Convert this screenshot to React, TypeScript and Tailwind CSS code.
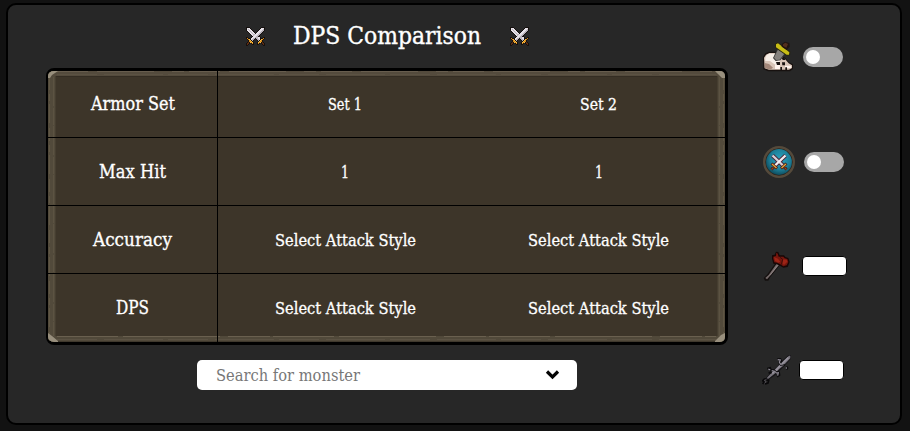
import React from "react";

const palette: Record<string, string> = {
  K: "#15100e",
  W: "#e6e2e8",
  G: "#b9b3bb",
  O: "#d98a18",
  Y: "#f6bd48",
  B: "#5a2c14",
};

const swordRows = [
  "KKKK...........KKKK",
  "KWWWK.........KWWWK",
  "KWGWWK.......KWWWGK",
  "KWWGWWK.....KWWWGGK",
  ".KWWGWWK...KWWWGGK.",
  "..KWWGWWK.KWWWGGK..",
  "...KWWGWWKWWWGGK...",
  "....KWWGGWWWGGK....",
  ".....KWGWWWGGK.....",
  "......KWWWGGKK.....",
  "KK...KWWWGGGWWK..KK",
  "KOKKKWWGGKGGWWKKKOK",
  ".KOYKWGGK.KGGWKYOK.",
  "..KOYKGK...KGKYOK..",
  "..KOOYK.....KYOOK..",
  ".KBKYOYK...KYOYKBK.",
  "KBBK.KOK...KOK.KBBK",
  "KBK...KK...KK...KBK",
  "KK...............KK",
];

function Swords() {
  return (
    <svg width="19" height="19" viewBox="0 0 19 19" shapeRendering="crispEdges" className="shrink-0">
      {swordRows.flatMap((row, r) =>
        [...row].map((c, i) =>
          c === "." ? null : <rect key={`${r}-${i}`} x={i} y={r} width="1" height="1" fill={palette[c]} />
        )
      )}
    </svg>
  );
}

function Skull() {
  return (
    <svg width="32" height="32" viewBox="36 33 96 96">
      <path d="M39 81L46 70L57 65H78L93 76L106 84L117 97L129 103V117L120 124H54L40 118Z" fill="#17110f" />
      <path d="M42 83L48 74L58 69H75L91 79L105 87L116 100L126 106V114L117 119H57L44 115Z" fill="#d8c5b8" />
      <path d="M50 75L58 71H73L87 84L90 100L78 106L60 93H46V84Z" fill="#f6eee7" />
      <path d="M44 99L57 102L69 113L63 118H54L44 113Z" fill="#a38779" />
      <path d="M75 105H90V117H75ZM105 107H123V114H105Z" fill="#fff4ee" />
      <path d="M78 96H90V105H81ZM96 97H105V106H97ZM95 83H103L106 90H98ZM91 111H96V120H91ZM106 112H111V120H106Z" fill="#17110f" />
      <path d="M84 53L107 71L91 91L77 93L69 84Z" fill="#343332" />
      <path d="M85 56L103 71L89 89L78 90L72 83Z" fill="#85817d" />
      <path d="M75 41L83 37L121 65L120 76L110 77L76 54Z" fill="#29270e" />
      <path d="M78 43L84 40L118 67L117 74L110 74L78 52Z" fill="#c9be16" />
      <path d="M95 42L105 35L118 39L119 50L110 60L95 50Z" fill="#211510" />
      <path d="M99 43L106 38L114 42L109 53L99 48Z" fill="#53301f" />
    </svg>
  );
}

function Medallion() {
  return (
    <svg width="32" height="32" viewBox="0 0 32 32">
      <defs>
        <radialGradient id="teal" cx=".55" cy=".4" r=".6">
          <stop offset="0" stopColor="#2ba5c0" />
          <stop offset=".65" stopColor="#1d7f98" />
          <stop offset="1" stopColor="#0f4e60" />
        </radialGradient>
      </defs>
      <circle cx="16" cy="16" r="14.6" fill="#12282c" stroke="#554a3b" strokeWidth="2.8" />
      <circle cx="16" cy="16" r="13.3" fill="none" stroke="#302219" strokeWidth="0.8" />
      <circle cx="16" cy="16" r="12.9" fill="url(#teal)" />
      <g fill="none">
        <path d="M9.5 9.5L21 20.5M22.5 9.5L11 20.5" stroke="#4b2030" strokeWidth="4" />
        <path d="M9.5 9.5L20.5 20" stroke="#d6d1d8" strokeWidth="2.4" />
        <path d="M22.5 9.5L11.5 20" stroke="#f0edf1" strokeWidth="2.4" />
        <path d="M8.5 17.5L14 22.5M23.5 17.5L18 22.5M11.5 20L8.5 23.5M20.5 20L23.5 23.5" stroke="#471a12" strokeWidth="2.8" />
        <path d="M9 18L13.5 22M23 18L18.5 22" stroke="#e4a33a" strokeWidth="1.4" />
        <path d="M10.5 21.5L8.5 23.5M21.5 21.5L23.5 23.5" stroke="#8c4320" strokeWidth="1.2" />
      </g>
    </svg>
  );
}

function Axe() {
  return (
    <svg width="27" height="30" viewBox="39 45 81 90">
      <path d="M79 78L91 86L61 123L55 134H45L41 126L51 116Z" fill="#15100f" />
      <path d="M81 82L87 87L57 123L51 130L46 126L56 117Z" fill="#746969" />
      <path d="M83 88L60 118" stroke="#9a9090" strokeWidth="2" />
      <path d="M78 47L85 48L89 58L102 58L106 63L115 66L119 78L113 93L100 95L90 89L80 85L70 83L66 68L66 58L74 56Z" fill="#180706" />
      <path d="M79 50L83 53L86 62L100 62L104 67L112 69L115 78L110 88L100 91L91 85L82 80L73 79L70 68L70 62L78 60Z" fill="#74150d" />
      <path d="M72 63L84 68L91 77L85 80L75 75ZM100 70L110 71L112 77L102 87L97 82Z" fill="#9d2416" />
      <path d="M90 64L98 70L94 86" fill="none" stroke="#3c0d09" strokeWidth="3" />
    </svg>
  );
}

function Godsword() {
  return (
    <svg width="29" height="30" viewBox="36 45 87 90">
      <path d="M116 45H123V56L101 80L89 92L77 105L59 117L52 122L46 116L63 97L82 79L94 64Z" fill="#151417" />
      <path d="M117 47H121V55L99 78L87 88L74 101L55 116L51 113L67 96L84 79L97 65Z" fill="#77737b" />
      <path d="M115 53L93 75L77 92L67 100" fill="none" stroke="#96929c" strokeWidth="5" />
      <path d="M82 58L91 57L94 64L88 68L93 75L104 75M52 86L60 84L63 91L72 91L78 96L87 97L88 105L81 110M56 99L65 97M109 80L112 84L109 88" fill="none" stroke="#0b0a0c" strokeWidth="6" />
      <path d="M83 59L91 60L88 67L93 74L101 75M65 92L74 94L79 99L85 98L83 107M55 87L61 90M109 82V86" fill="none" stroke="#918c97" strokeWidth="3.4" />
      <path d="M50 117L43 117L38 122L42 126L38 132M49 119L56 121L54 129L45 132" fill="none" stroke="#09080a" strokeWidth="5" />
      <path d="M48 119L43 121L48 125L44 130M54 112L50 119" fill="none" stroke="#5c5860" strokeWidth="2.4" />
    </svg>
  );
}

function StoneFrame() {
  return (
    <svg className="absolute inset-0 h-full w-full" viewBox="0 0 677 271" preserveAspectRatio="none">
      <rect width="677" height="271" fill="#3d3529" />
      <rect width="8" height="271" fill="#524a3b" />
      <rect x="669" width="8" height="271" fill="#524a3b" />
      <rect width="677" height="5" fill="#544b3d" />
      <rect y="265" width="677" height="6" fill="#51493a" />
      <g fill="none" strokeWidth="1">
        <path d="M1.5 6V265M675.5 6V265" stroke="#5f5644" strokeDasharray="13 4 7 3 19 5" />
        <path d="M5.5 6V265M671.5 6V265" stroke="#5c5342" strokeDasharray="29 2 17 1" />
        <path d="M7.5 5V265M669.5 5V265" stroke="#463e30" />
        <path d="M8 5.5H669" stroke="#342d23" />
        <path d="M9 .5H668" stroke="#675d4e" strokeDasharray="31 9 57 18 12 5" />
        <path d="M9 265.5H668" stroke="#6a604f" strokeDasharray="61 5 97 8 42 3" />
        <path d="M9 3.5H668M9 268.5H668" stroke="#5b5243" strokeDasharray="40 7 59 5" />
        <path d="M9 270.5H668" stroke="#40392d" />
      </g>
      <path d="M0 0H10L7 2L4 4L2 7H0ZM677 0H667L670 3L674 7H677ZM0 271V262L4 265L10 270V271ZM677 271V262L673 264L667 270V271Z" fill="#988f7d" />
    </svg>
  );
}

function Row({ label, a, b, line }: { label: React.ReactNode; a: React.ReactNode; b: React.ReactNode; line?: boolean }) {
  return (
    <div className={`grid h-[68px] grid-cols-[170px_254px_253px] ${line ? "border-b border-black" : ""}`}>
      <div className="flex items-center justify-center border-r border-black">{label}</div>
      <div className="flex items-center justify-center">{a}</div>
      <div className="flex items-center justify-center">{b}</div>
    </div>
  );
}

/* A run of text set to an exact advance width. */
function Fit({ text, width, size, color = "#ffffff", weight = 0.3 }: { text: string; width: number; size: number; color?: string; weight?: number }) {
  return (
    <svg width={width} height={24} className="block shrink-0 overflow-visible">
      <text
        x="0"
        y={12 + size * 0.36}
        fill={color}
        stroke={color}
        strokeWidth={weight}
        fontSize={size}
        textLength={width}
        lengthAdjust="spacingAndGlyphs"
        className="font-['Roboto_Slab','DejaVu_Serif_Condensed','DejaVu_Serif',serif]"
      >
        {text}
      </text>
    </svg>
  );
}

function Toggle() {
  return (
    <button className="flex h-5 w-10 items-center rounded-full bg-[#a7a7a7] pl-[3px]">
      <span className="h-3.5 w-3.5 rounded-full bg-white" />
    </button>
  );
}

export default function App() {
  const style = <Fit text="Select Attack Style" width={141} size={16.4} />;
  return (
    <div className="h-[431px] w-[910px] bg-[#121212] pt-[3px] pl-[6px] text-white">
      <div className="flex h-[422px] w-[896px] rounded-[10px] border-2 border-black bg-[#272727]">
        <main className="flex w-[754px] flex-col pl-[38px]">
          <header className="flex h-[63px] w-[682px] items-center pl-[200px]">
            <Swords />
            <div className="ml-[28px] pb-[3px]">
              <Fit text="DPS Comparison" width={188} size={23.6} weight={0.35} />
            </div>
            <div className="ml-[29px]">
              <Swords />
            </div>
          </header>
          <section className="relative h-[277px] w-[682px] overflow-hidden rounded-[8px] border-t-[3px] border-r-[3px] border-b-[3px] border-l-2 border-black">
            <StoneFrame />
            <div className="relative -mt-px">
              <Row line label={<Fit text="Armor Set" width={84} size={17.6} />} a={<Fit text="Set 1" width={34} size={16.4} />} b={<Fit text="Set 2" width={37} size={16.4} />} />
              <Row line label={<Fit text="Max Hit" width={67} size={17.6} />} a={<Fit text="1" width={8} size={16.4} />} b={<Fit text="1" width={8} size={16.4} />} />
              <Row line label={<Fit text="Accuracy" width={79} size={17.6} />} a={style} b={style} />
              <Row label={<Fit text="DPS" width={33} size={17.6} />} a={style} b={style} />
            </div>
          </section>
          <div className="mt-[15px] ml-[151px] flex h-[30px] w-[380px] items-center justify-between rounded-[5px] bg-white pr-[17px] pl-[19px]">
            <Fit text="Search for monster" width={144} size={16.4} color="#777777" weight={0} />
            <svg width="15" height="12" viewBox="0 0 15 12">
              <path d="M2 2.5L7.5 8L13 2.5" fill="none" stroke="#050505" strokeWidth="3.2" />
            </svg>
          </div>
        </main>
        <aside className="grid w-[138px] grid-rows-[104px_105px_104px_104px]">
          <div className="flex items-center gap-[9px]"><Skull /><Toggle /></div>
          <div className="flex items-center gap-[9px] pl-px"><Medallion /><Toggle /></div>
          <div className="flex items-center gap-[12px] pl-px">
            <Axe />
            <div className="h-5 w-[45px] rounded-[4px] border border-black bg-white" />
          </div>
          <div className="flex items-center gap-[8px]">
            <Godsword />
            <div className="h-5 w-[45px] rounded-[4px] border border-black bg-white" />
          </div>
        </aside>
      </div>
    </div>
  );
}
